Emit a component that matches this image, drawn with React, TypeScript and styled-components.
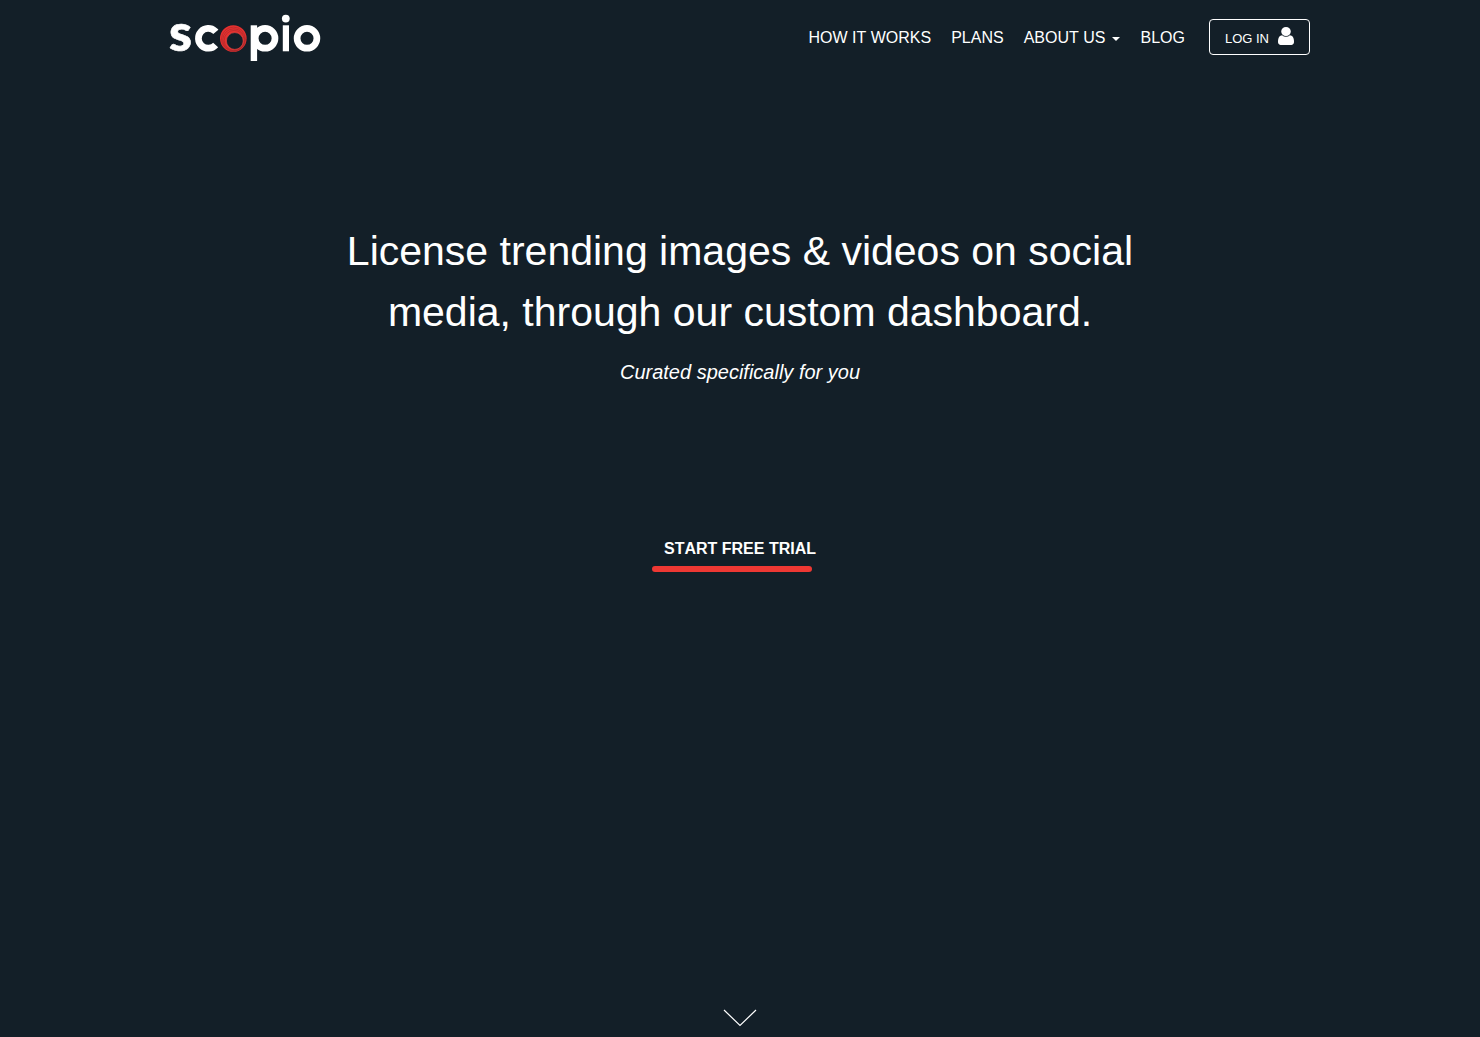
import React from "react";
import styled, { createGlobalStyle } from "styled-components";

const GlobalStyle = createGlobalStyle`
  *, *::before, *::after { box-sizing: border-box; }
  body {
    margin: 0;
    background: #131f28;
    color: #fff;
    font-family: "Liberation Sans", Arial, sans-serif;
    font-size: 16px;
    font-kerning: none;
  }
`;

const Page = styled.div`
  display: flex;
  flex-direction: column;
  min-height: 100vh;
`;

const Header = styled.header`
  display: flex;
  align-items: center;
  justify-content: space-between;
  width: 100%;
  max-width: 1180px;
  height: 74px;
  margin: 0 auto;
  padding: 0 20px;
`;

const HomeLink = styled.a`
  display: block;
  svg { display: block; overflow: visible; }
`;

const Nav = styled.nav`
  display: flex;
  align-items: center;
  gap: 20px;
`;

const NavLink = styled.a`
  display: flex;
  align-items: center;
  gap: 7px;
  padding-top: 2px;
  color: #fff;
  line-height: 20px;
  text-decoration: none;
  text-transform: uppercase;
`;

const Caret = styled.span`
  margin-top: 2px;
  border-top: 4px solid #fff;
  border-left: 4px solid transparent;
  border-right: 4px solid transparent;
`;

const LoginButton = styled.button`
  display: flex;
  align-items: center;
  gap: 9px;
  height: 36px;
  margin-left: 4px;
  padding: 0 15px;
  border: 1px solid #fff;
  border-radius: 4px;
  background: transparent;
  color: #fff;
  font: 13px/18px "Liberation Sans", Arial, sans-serif;
  font-kerning: none;
  text-transform: uppercase;
  cursor: pointer;
  span { padding-top: 3px; }
  svg { display: block; margin-bottom: 2px; }
`;

const Hero = styled.main`
  display: flex;
  flex: 1;
  flex-direction: column;
  align-items: center;
  padding: 147px 20px 0;
  text-align: center;
`;

const Headline = styled.h1`
  max-width: 860px;
  margin: 0;
  font-size: 41px;
  font-weight: 400;
  line-height: 61px;
`;

const Tagline = styled.p`
  margin: 17px 0 0;
  font-size: 20px;
  font-style: italic;
  line-height: 24px;
`;

const TrialButton = styled.button`
  display: flex;
  flex-direction: column;
  margin-top: 155px;
  padding: 0;
  border: 0;
  background: transparent;
  color: #fff;
  font: bold 16px/20px "Liberation Sans", Arial, sans-serif;
  font-kerning: none;
  text-transform: uppercase;
  cursor: pointer;
  span { padding: 0 12px; }
  &::after {
    content: "";
    width: 160px;
    height: 6px;
    margin-top: 7px;
    border-radius: 3px;
    background: #ee3833;
  }
`;

const ScrollLink = styled.a`
  align-self: center;
  padding-bottom: 10px;
  svg { display: block; }
`;

const Logo = () => (
  <svg width="150" height="48" viewBox="0 0 150 48" role="img" aria-label="Scopio">
    <text
      x="-1"
      y="38"
      fill="#fff"
      stroke="#fff"
      strokeWidth="0.6"
      fontFamily="Lato, sans-serif"
      fontWeight="900"
      fontSize="52"
    >
      s
    </text>
    <g fill="none" stroke="#fff" strokeWidth="6.7">
      <circle cx="38.3" cy="25.3" r="9.9" strokeDasharray="47.7 14.5" transform="rotate(42 38.3 25.3)" />
      <circle cx="95.1" cy="25.3" r="9.9" />
      <circle cx="137" cy="25.3" r="9.9" />
    </g>
    <g fill="#fff">
      <rect x="80.7" y="12.3" width="6.4" height="35.7" />
      <rect x="112.8" y="12.3" width="6.2" height="26" />
      <circle cx="115.8" cy="5.6" r="3.9" />
    </g>
    <circle cx="63.3" cy="25.5" r="13.3" fill="#e8312f" />
    <g fill="none" stroke="#a3292c" strokeWidth="0.6">
      <circle cx="63.5" cy="26.1" r="12" />
      <circle cx="63.8" cy="26.8" r="11" />
      <circle cx="64.2" cy="27.4" r="10" />
    </g>
    <circle cx="64.8" cy="28" r="8.4" fill="#131f28" stroke="#f04a45" strokeWidth="0.6" />
  </svg>
);

const UserIcon = () => (
  <svg width="16" height="18" viewBox="0 128 1280 1536" preserveAspectRatio="none" aria-hidden="true">
    <path
      fill="#fff"
      d="M1280 1399q0 109-62.5 187t-150.5 78h-854q-88 0-150.5-78t-62.5-187q0-85 8.5-160.5t31.5-152 58.5-131 94-89 134.5-34.5q131 128 313 128t313-128q76 0 134.5 34.5t94 89 58.5 131 31.5 152 8.5 160.5zm-256-887q0 159-112.5 271.5t-271.5 112.5-271.5-112.5-112.5-271.5 112.5-271.5 271.5-112.5 271.5 112.5 112.5 271.5z"
    />
  </svg>
);

export default function App() {
  return (
    <Page>
      <GlobalStyle />
      <Header>
        <HomeLink href="#">
          <Logo />
        </HomeLink>
        <Nav>
          <NavLink href="#how">How it works</NavLink>
          <NavLink href="#plans">Plans</NavLink>
          <NavLink href="#about">
            About us <Caret />
          </NavLink>
          <NavLink href="#blog">Blog</NavLink>
          <LoginButton type="button">
            <span>Log in</span>
            <UserIcon />
          </LoginButton>
        </Nav>
      </Header>
      <Hero>
        <Headline>
          License trending images &amp; videos on social media, through our custom dashboard.
        </Headline>
        <Tagline>Curated specifically for you</Tagline>
        <TrialButton type="button">
          <span>Start free trial</span>
        </TrialButton>
      </Hero>
      <ScrollLink href="#how" aria-label="Scroll down">
        <svg width="34" height="18" viewBox="0 0 34 18" fill="none" stroke="#fff" strokeWidth="1.2">
          <path d="M1 1l16 15.500l16-15.500" />
        </svg>
      </ScrollLink>
    </Page>
  );
}
